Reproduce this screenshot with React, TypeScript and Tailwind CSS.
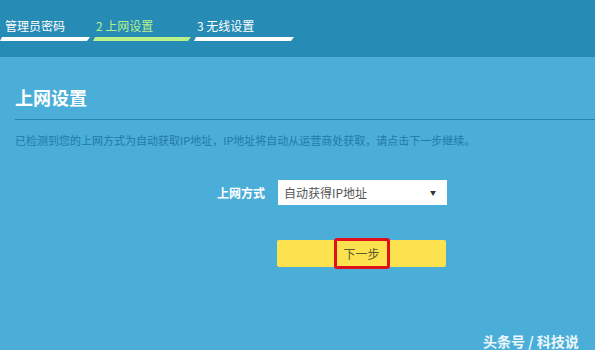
const font = { fontFamily: '"Microsoft YaHei", "Noto Sans CJK SC", sans-serif' }

export default function App() {
  return (
    <div className="relative flex h-[350px] w-[600px] overflow-hidden bg-white" style={font}>
      <div className="flex w-[595px] flex-col bg-[#4aaed9]">
        {/* Steps header */}
        <div className="h-[57px] shrink-0 bg-[#268bb5] pt-[17px]">
          <div className="flex">
            {[
              { label: '管理员密码', w: 'w-[93px]', text: 'text-white', bar: 'bg-white', pl: 'pl-[5px]' },
              { label: '2 上网设置', w: 'w-[101px]', text: 'text-[#b8f08a]', bar: 'bg-[#b8f08a]', pl: 'pl-[3px]' },
              { label: '3 无线设置', w: 'w-[103px]', text: 'text-white', bar: 'bg-white', pl: 'pl-[3px]' },
            ].map(s => (
              <div key={s.label} className={`${s.w} flex flex-col`}>
                <span className={`${s.pl} ${s.text} h-[18px] text-[12px] leading-[18px]`}>{s.label}</span>
                <div className={`mt-[2px] h-[4px] ${s.bar} mr-[3px] [clip-path:polygon(2px_0,100%_0,calc(100%-3px)_100%,0_100%)]`} />
              </div>
            ))}
          </div>
        </div>

        {/* Body */}
        <div className="flex flex-col pl-[15px]">
          <h2 className="mt-[29px] text-[18px] font-bold leading-[22px] text-white">上网设置</h2>
          <div className="mt-[11px] h-px bg-[#2585b0]" />
          <p className="mt-[12px] text-[11px] leading-[16px] text-[#2379a8]">
            已检测到您的上网方式为自动获取IP地址，IP地址将自动从运营商处获取，请点击下一步继续。
          </p>

          <div className="mt-[32px] flex items-center">
            <span className="w-[263px] pr-[13px] text-right text-[12px] font-bold text-white">上网方式</span>
            <div className="flex h-[25px] w-[169px] items-center justify-between bg-white pl-[6px] pr-[11px]">
              <span className="text-[12px] text-[#555]">自动获得IP地址</span>
              <span className="text-[6px] text-[#333]">▼</span>
            </div>
          </div>

          <div className="mt-[35px] ml-[262px] flex h-[27px] w-[169px] items-center justify-center rounded-[2px] bg-[#fde24f]">
            <span className="flex h-[31px] w-[56px] items-center justify-center rounded-[3px] border-[3px] border-[#e0101a] text-[12px] text-[#5a5a2a]">
              下一步
            </span>
          </div>
        </div>
      </div>

      {/* watermark */}
      <span className="absolute left-[483px] top-[333px] text-[14px] font-bold leading-[16px] text-white/90">头条号 / 科技说</span>
    </div>
  )
}
